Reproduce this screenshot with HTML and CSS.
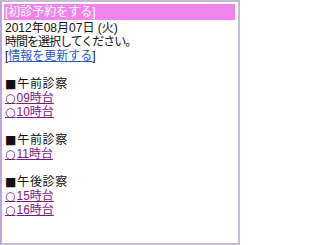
FILE: index.html
```html
<!DOCTYPE html>
<html lang="ja">
<head>
<meta charset="utf-8">
<link rel="stylesheet" href="styles.css">
</head>
<body>
<div class="frame">
  <div class="header">[初診予約をする]</div>
  <div class="line">2012年08月07日 (火)</div>
  <div class="line tight">時間を選択してください。</div>
  <div class="line">[<a class="link" href="#">情報を更新する</a>]</div>
  <div class="blank"></div>
  <div class="line wide"><span class="mark">■</span>午前診察</div>
  <div class="line"><a class="visited" href="#"><span class="mark">○</span>09時台</a></div>
  <div class="line"><a class="visited" href="#"><span class="mark">○</span>10時台</a></div>
  <div class="blank"></div>
  <div class="line wide"><span class="mark">■</span>午前診察</div>
  <div class="line"><a class="visited" href="#"><span class="mark">○</span>11時台</a></div>
  <div class="blank"></div>
  <div class="line wide"><span class="mark">■</span>午後診察</div>
  <div class="line"><a class="visited" href="#"><span class="mark">○</span>15時台</a></div>
  <div class="line"><a class="visited" href="#"><span class="mark">○</span>16時台</a></div>
</div>
</body>
</html>
```
FILE: styles.css
```css
html, body {
  margin: 0;
  padding: 0;
  background: #ffffff;
}
.frame {
  box-sizing: border-box;
  width: 240px;
  height: 245px;
  border: 2px solid #c6bcd2;
  border-left-color: #bca6d6;
  padding: 2px 3px 0 2px;
  font-family: "Liberation Sans", "Noto Sans CJK JP", sans-serif;
  font-size: 12px;
  line-height: 14px;
  color: #111111;
}
.header {
  background: #ee84ec;
  color: #ffffff;
  height: 16px;
  line-height: 16px;
  padding-left: 1px;
  margin-bottom: 1px;
}
.line {
  height: 14px;
  line-height: 14px;
  padding-left: 1px;
  white-space: nowrap;
}
.tight {
  letter-spacing: -1px;
}
.wide {
  letter-spacing: 0.6px;
}
.blank {
  height: 14px;
}
.mark {
  font-family: "DejaVu Sans", sans-serif;
  font-size: 12px;
  line-height: 14px;
  letter-spacing: 0;
  margin-right: 1px;
}
.link {
  color: #1f5cc0;
  text-decoration: underline;
}
.visited {
  color: #7a1a86;
  text-decoration: underline;
}
```
